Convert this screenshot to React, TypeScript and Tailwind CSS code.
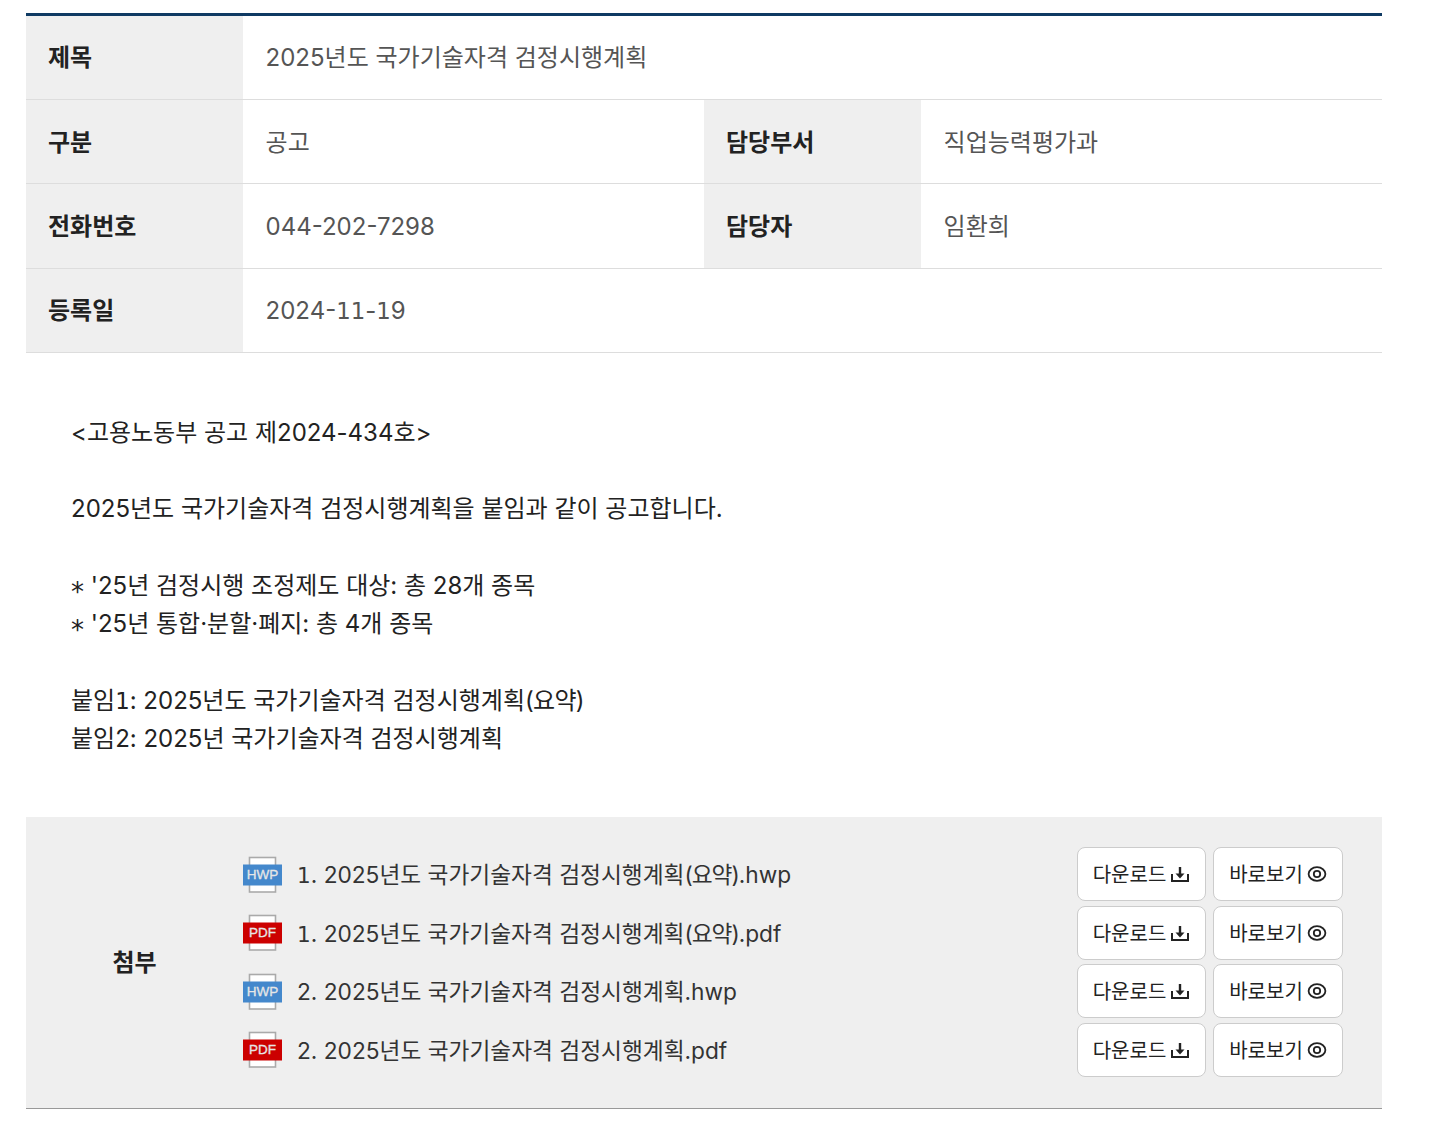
const FONT = 'Inter, "Noto Sans CJK KR", "Noto Sans", sans-serif';

function One() {
  return <span className="font-['DejaVu_Sans'] text-[0.95em] leading-none">1</span>;
}

function T({ s }: { s: string }) {
  const parts = s.split("1");
  return (
    <>
      {parts.map((p, i) => (
        <span key={i}>
          {i > 0 && <One />}
          {p}
        </span>
      ))}
    </>
  );
}

function Th({ children }: { children: React.ReactNode }) {
  return (
    <div className="flex items-center bg-[#efefef] pl-[22px] pt-[1.8px] text-[24px] leading-[30px] font-bold text-[#222222] border-b border-[#dddddd]">
      {children}
    </div>
  );
}

function Td({ children, span }: { children?: React.ReactNode; span?: boolean }) {
  return (
    <div className={`flex items-center pl-[22.6px] pt-[1.8px] text-[24px] leading-[30px] text-[#555555] border-b border-[#dddddd] ${span ? "col-span-3" : ""}`}>
      <div>{children}</div>
    </div>
  );
}

function FileIcon({ kind }: { kind: "HWP" | "PDF" }) {
  const color = kind === "HWP" ? "#4488cc" : "#cc0000";
  return (
    <svg width="40" height="37" viewBox="0 0 40 37" className="shrink-0">
      <rect x="6.5" y="1.5" width="26" height="34.5" fill="#ffffff" stroke="#aaaaaa" strokeWidth="1.6" />
      <rect x="0" y="8.500" width="39" height="21" fill={color} />
      <text x="19.5" y="23.200" textAnchor="middle" fontSize="13.5" fill="#e6e6e6" stroke="#e6e6e6" strokeWidth="0.3" fontFamily="Liberation Sans, sans-serif">
        {kind}
      </text>
    </svg>
  );
}

function DownloadIcon() {
  return (
    <svg width="20" height="20" viewBox="0 0 20 20" fill="none" className="shrink-0">
      <path d="M2 10v7h16v-7" stroke="#222222" strokeWidth="2" />
      <path d="M10 3v9" stroke="#222222" strokeWidth="2.4" />
      <path d="M5.5 9.5h9L10 14.500z" fill="#222222" />
    </svg>
  );
}

function EyeIcon() {
  return (
    <svg width="20" height="20" viewBox="0 0 20 20" fill="none" className="shrink-0">
      <ellipse cx="10" cy="10" rx="8.4" ry="6.800" stroke="#222222" strokeWidth="1.8" />
      <circle cx="10" cy="10" r="3.200" stroke="#222222" strokeWidth="1.800" />
    </svg>
  );
}

function Btn({ label, icon, w }: { label: string; icon: React.ReactNode; w: string }) {
  return (
    <div className={`flex h-[54px] items-center justify-center gap-[4px] rounded-[8px] border border-[#cccccc] bg-white text-[20px] leading-[26px] text-[#222222] ${w}`}>
      <span className="pt-[2.2px]">{label}</span>
      {icon}
    </div>
  );
}

const files: { kind: "HWP" | "PDF"; name: string; summary: boolean; ext: string }[] = [
  { kind: "HWP", name: "1. 2025년도 국가기술자격 검정시행계획", summary: true, ext: ".hwp" },
  { kind: "PDF", name: "1. 2025년도 국가기술자격 검정시행계획", summary: true, ext: ".pdf" },
  { kind: "HWP", name: "2. 2025년도 국가기술자격 검정시행계획", summary: false, ext: ".hwp" },
  { kind: "PDF", name: "2. 2025년도 국가기술자격 검정시행계획", summary: false, ext: ".pdf" },
];

const Star = () => (
  <span className="inline-block w-[13px] translate-y-[7px] font-['DejaVu_Sans'] text-[26px] leading-none">*</span>
);

export default function App() {
  return (
    <div className="min-h-[1133px] bg-white pt-[13px] pl-[26px]" style={{ fontFamily: FONT }}>
      <div className="w-[1356px]">
        <div className="border-t-[3px] border-[#0f3a63] grid grid-cols-[217px_461px_217px_461px] auto-rows-[84.2px]">
          <Th>제목</Th>
          <Td span>2025년도 국가기술자격 검정시행계획</Td>
          <Th>구분</Th>
          <Td>공고</Td>
          <Th>담당부서</Th>
          <Td>직업능력평가과</Td>
          <Th>전화번호</Th>
          <Td>044-202-7298</Td>
          <Th>담당자</Th>
          <Td>임환희</Td>
          <Th>등록일</Th>
          <Td span><T s="2024-11-19" /></Td>
        </div>

        <div className="px-[45px] pt-[61px] pb-[59.2px] text-[24px] leading-[38.25px] text-[#222222]">
          <div className="h-[38.25px]">{"<고용노동부 공고 제2024-434호>"}</div>
          <div className="h-[38.25px]" />
          <div className="h-[38.25px]">2025년도 국가기술자격 검정시행계획을 붙임과 같이 공고합니다.</div>
          <div className="h-[38.25px]" />
          <div className="h-[38.25px]"><Star /> '25년 검정시행 조정제도 대상: 총 28개 종목</div>
          <div className="h-[38.25px]"><Star /> '25년 통합·분할·폐지: 총 4개 종목</div>
          <div className="h-[38.25px]" />
          <div className="h-[38.25px]">붙임<One />: 2025년도 국가기술자격 검정시행계획<span className="tracking-[-0.7px]">(요약)</span></div>
          <div className="h-[38.25px]">붙임2: 2025년 국가기술자격 검정시행계획</div>
        </div>

        <div className="flex h-[292px] bg-[#efefef] border-b border-[#999999]">
          <div className="flex w-[217px] items-center justify-center text-[24px] font-bold text-[#222222]">첨부</div>
          <div className="flex flex-1 flex-col gap-[4.5px] pt-[30px] pr-[39px]">
            {files.map((f, i) => (
              <div key={i} className="flex h-[54px] items-center">
                <FileIcon kind={f.kind} />
                <span className="ml-[14px] pt-[2.2px] text-[22.7px] leading-[30px] text-[#333333]">
                  <T s={f.name} />
                  {f.summary && <span className="tracking-[-1px]">(요약)</span>}
                  {f.ext}
                </span>
                <div className="ml-auto flex gap-[7px]">
                  <Btn label="다운로드" icon={<DownloadIcon />} w="w-[129px]" />
                  <Btn label="바로보기" icon={<EyeIcon />} w="w-[130px]" />
                </div>
              </div>
            ))}
          </div>
        </div>
      </div>
    </div>
  );
}
